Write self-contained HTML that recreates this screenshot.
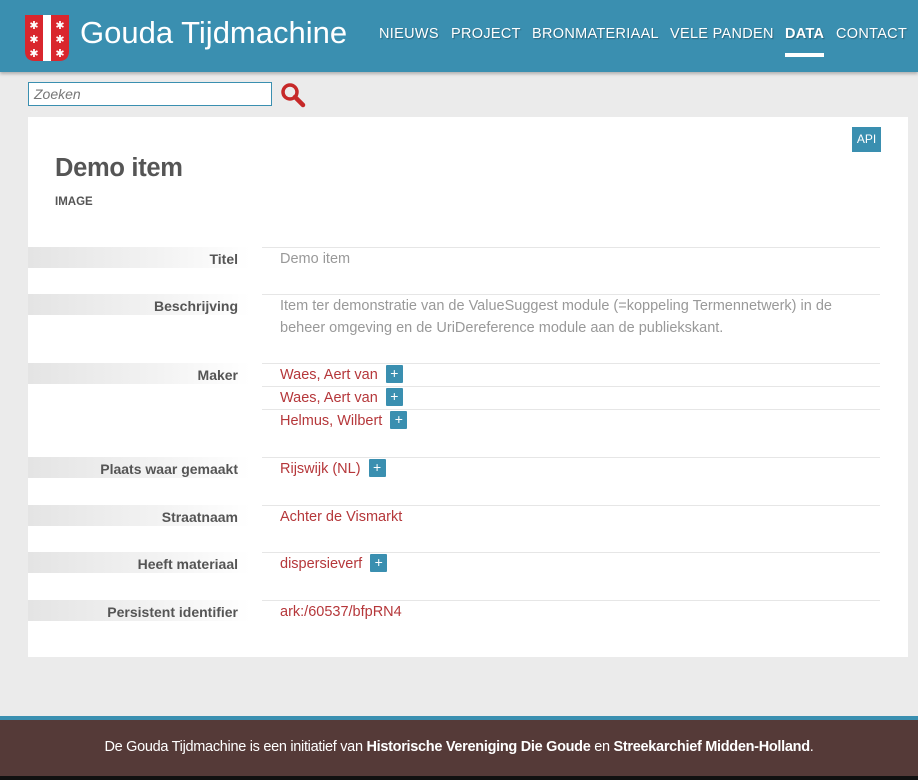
<!DOCTYPE html>
<html><head><meta charset="utf-8"><style>
*{margin:0;padding:0;box-sizing:border-box}
body{width:918px;height:780px;background:#ebebeb;font-family:"Liberation Sans",sans-serif;position:relative;overflow:hidden}
.hdr{position:absolute;left:0;top:0;width:918px;height:72px;background:#3a8fb0;box-shadow:0 2px 3px rgba(0,0,0,.25)}
.title{position:absolute;left:80px;top:15px;color:#fff;font-size:31px;letter-spacing:0px}
.nav{position:absolute;top:26px;color:#fff;font-size:14.5px;text-shadow:1px 1px 1px rgba(0,0,0,.3);letter-spacing:0.3px}
.nav b{font-weight:bold}
.ul{position:absolute;left:785px;top:53px;width:39px;height:4px;background:#fff}
.search{position:absolute;left:28px;top:82px;width:244px;height:24px;border:1px solid #3a8fb0;background:#fff;font-style:italic;color:#777;font-size:14px;padding:3px 5px}
.card{position:absolute;left:28px;top:117px;width:880px;height:540px;background:#fff}
.api{position:absolute;left:852px;top:127px;width:29px;height:25px;background:#3a8fb0;color:#fff;font-size:12px;text-align:center;line-height:25px}
h1{position:absolute;left:55px;top:154px;font-size:25.5px;color:#555;font-weight:bold;letter-spacing:-0.3px}
.type{position:absolute;left:55px;top:196px;font-size:11.5px;font-weight:bold;color:#555}
.lab{position:absolute;left:28px;width:222px;height:21px;background:linear-gradient(90deg,#e4e4e4,#f3f3f3 60%,#fff);text-align:right;padding-right:12px;font-weight:bold;font-size:14px;color:#555;line-height:24px}
.line{position:absolute;left:262px;width:618px;border-top:1px solid #e6e6e6}
.val{position:absolute;left:280px;font-size:14.5px;color:#999;line-height:22px}
.lnk{position:absolute;left:280px;font-size:14.5px;color:#b5373a;line-height:22px}
.plus{display:inline-block;width:17px;height:18px;background:#3a8fb0;color:#fff;font-size:14px;text-align:center;line-height:17px;vertical-align:1px;margin-left:8px;border-radius:1px}
.foot{position:absolute;left:0;top:716px;width:918px;height:60px;background:#553a38;border-top:4px solid #3a8fb0;color:#fff;font-size:14.5px;text-align:center;line-height:54px;letter-spacing:-0.3px}
.bot{position:absolute;left:0;top:776px;width:918px;height:4px;background:#111}
</style></head><body>
<div class="hdr">
<svg style="position:absolute;left:25px;top:15px" width="44" height="47" viewBox="0 0 44 47">
<path d="M0 0H44V36Q44 46 34 46H10Q0 46 0 36Z" fill="#d9262d"/>
<rect x="18" y="0" width="8" height="46" fill="#fff"/>
<g fill="#fff" font-size="11" font-family="DejaVu Sans" text-anchor="middle">
<text x="9" y="14">✱</text><text x="35" y="14">✱</text>
<text x="9" y="28">✱</text><text x="35" y="28">✱</text>
<text x="9" y="42">✱</text><text x="35" y="42">✱</text></g>
</svg>
<div class="title">Gouda Tijdmachine</div>
<div class="nav" style="left:379px">NIEUWS</div>
<div class="nav" style="left:451px">PROJECT</div>
<div class="nav" style="left:532px">BRONMATERIAAL</div>
<div class="nav" style="left:670px">VELE PANDEN</div>
<div class="nav" style="left:785px"><b>DATA</b></div>
<div class="nav" style="left:836px">CONTACT</div>
<div class="ul"></div>
</div>
<div class="search">Zoeken</div>
<svg style="position:absolute;left:280px;top:82px" width="26" height="26" viewBox="0 0 26 26"><circle cx="10" cy="10" r="7" fill="none" stroke="#c62828" stroke-width="3.5"/><path d="M15 15L23 23" stroke="#c62828" stroke-width="4.5" stroke-linecap="round"/></svg>
<div class="card"></div>
<div class="api">API</div>
<h1>Demo item</h1>
<div class="type">IMAGE</div>

<div class="lab" style="top:247px">Titel</div><div class="line" style="top:247px"></div>
<div class="val" style="top:248px">Demo item</div>

<div class="lab" style="top:294px">Beschrijving</div><div class="line" style="top:294px"></div>
<div class="val" style="top:295px;width:590px">Item ter demonstratie van de ValueSuggest module (=koppeling Termennetwerk) in de beheer omgeving en de UriDereference module aan de publiekskant.</div>

<div class="lab" style="top:363px">Maker</div><div class="line" style="top:363px"></div>
<div class="lnk" style="top:364px">Waes, Aert van<span class="plus">+</span></div>
<div class="line" style="top:386px"></div>
<div class="lnk" style="top:387px">Waes, Aert van<span class="plus">+</span></div>
<div class="line" style="top:409px"></div>
<div class="lnk" style="top:410px">Helmus, Wilbert<span class="plus">+</span></div>

<div class="lab" style="top:457px">Plaats waar gemaakt</div><div class="line" style="top:457px"></div>
<div class="lnk" style="top:458px">Rijswijk (NL)<span class="plus">+</span></div>

<div class="lab" style="top:505px">Straatnaam</div><div class="line" style="top:505px"></div>
<div class="lnk" style="top:506px">Achter de Vismarkt</div>

<div class="lab" style="top:552px">Heeft materiaal</div><div class="line" style="top:552px"></div>
<div class="lnk" style="top:553px">dispersieverf<span class="plus">+</span></div>

<div class="lab" style="top:600px">Persistent identifier</div><div class="line" style="top:600px"></div>
<div class="lnk" style="top:601px">ark:/60537/bfpRN4</div>

<div class="foot">De Gouda Tijdmachine is een initiatief van <b>Historische Vereniging Die Goude</b> en <b>Streekarchief Midden-Holland</b>.</div>
<div class="bot"></div>
</body></html>
